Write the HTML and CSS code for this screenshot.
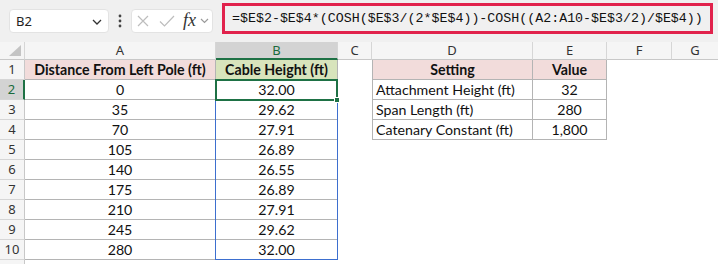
FILE: index.html
```html
<!DOCTYPE html>
<html>
<head>
<meta charset="utf-8">
<link rel="stylesheet" href="styles.css">
</head>
<body>
<div class="app">
  <div class="toolbar">
    <div class="namebox">
      <span class="ref">B2</span>
      <svg class="chev" width="10" height="6" viewBox="0 0 10 6"><path d="M1 1 L5 5 L9 1" fill="none" stroke="#333" stroke-width="1.3"/></svg>
    </div>
    <div class="dots">
      <svg width="4" height="14" viewBox="0 0 4 14"><circle cx="2" cy="2" r="1.4" fill="#444"/><circle cx="2" cy="7" r="1.4" fill="#444"/><circle cx="2" cy="12" r="1.4" fill="#444"/></svg>
    </div>
    <div class="fxbox">
      <svg class="ico-x" width="12" height="12" viewBox="0 0 12 12"><path d="M1 1 L11 11 M11 1 L1 11" stroke="#bdbdbd" stroke-width="1.2" fill="none"/></svg>
      <svg class="ico-ok" width="16" height="12" viewBox="0 0 16 12"><path d="M1 6.5 L5.5 11 L15 1" stroke="#bdbdbd" stroke-width="1.2" fill="none"/></svg>
      <span class="fx">fx</span>
      <svg class="chev2" width="9" height="6" viewBox="0 0 9 6"><path d="M1 1 L4.5 4.5 L8 1" fill="none" stroke="#9a9a9a" stroke-width="1.2"/></svg>
    </div>
    <div class="formula">=$E$2-$E$4*(COSH($E$3/(2*$E$4))-COSH((A2:A10-$E$3/2)/$E$4))</div>
  </div>
  <div class="sheet">
    <div class="grid">
      <div class="ch corner"><svg width="12" height="11" viewBox="0 0 12 11"><polygon points="12,0 12,11 0,11" fill="#c4c4c4"/></svg></div>
      <div class="ch">A</div>
      <div class="ch ch-sel">B</div>
      <div class="ch">C</div>
      <div class="ch">D</div>
      <div class="ch">E</div>
      <div class="ch">F</div>
      <div class="ch ch-last">G</div>

      <div class="rh">1</div>
      <div class="c t hdr pink">Distance From Left Pole (ft)</div>
      <div class="c t hdr green">Cable Height (ft)</div>
      <div class="c"></div>
      <div class="c t tl hdr pink">Setting</div>
      <div class="c t hdr pink">Value</div>
      <div class="c"></div>
      <div class="c"></div>

      <div class="rh rh-sel">2</div>
      <div class="c t">0</div>
      <div class="c t">32.00</div>
      <div class="c"></div>
      <div class="c t tl left">Attachment Height (ft)</div>
      <div class="c t">32</div>
      <div class="c"></div>
      <div class="c"></div>

      <div class="rh">3</div>
      <div class="c t">35</div>
      <div class="c t">29.62</div>
      <div class="c"></div>
      <div class="c t tl left">Span Length (ft)</div>
      <div class="c t">280</div>
      <div class="c"></div>
      <div class="c"></div>

      <div class="rh">4</div>
      <div class="c t">70</div>
      <div class="c t">27.91</div>
      <div class="c"></div>
      <div class="c t tl left">Catenary Constant (ft)</div>
      <div class="c t">1,800</div>
      <div class="c"></div>
      <div class="c"></div>

      <div class="rh">5</div>
      <div class="c t">105</div>
      <div class="c t">26.89</div>
      <div class="c"></div><div class="c"></div><div class="c"></div><div class="c"></div><div class="c"></div>

      <div class="rh">6</div>
      <div class="c t">140</div>
      <div class="c t">26.55</div>
      <div class="c"></div><div class="c"></div><div class="c"></div><div class="c"></div><div class="c"></div>

      <div class="rh">7</div>
      <div class="c t">175</div>
      <div class="c t">26.89</div>
      <div class="c"></div><div class="c"></div><div class="c"></div><div class="c"></div><div class="c"></div>

      <div class="rh">8</div>
      <div class="c t">210</div>
      <div class="c t">27.91</div>
      <div class="c"></div><div class="c"></div><div class="c"></div><div class="c"></div><div class="c"></div>

      <div class="rh">9</div>
      <div class="c t">245</div>
      <div class="c t">29.62</div>
      <div class="c"></div><div class="c"></div><div class="c"></div><div class="c"></div><div class="c"></div>

      <div class="rh">10</div>
      <div class="c t">280</div>
      <div class="c t">32.00</div>
      <div class="c"></div><div class="c"></div><div class="c"></div><div class="c"></div><div class="c"></div>

      <div class="rh"></div>
      <div class="c"></div><div class="c"></div><div class="c"></div><div class="c"></div><div class="c"></div><div class="c"></div><div class="c"></div>
    </div>
    <div class="spill"></div>
    <div class="sel"><span class="handle"></span></div>
  </div>
</div>
</body>
</html>
```

FILE: styles.css
```css
* { box-sizing: border-box; }
html, body { margin: 0; padding: 0; background: #fff; }
.app { width: 718px; height: 264px; overflow: hidden; font-family: "Lato", "Liberation Sans", sans-serif; }

.toolbar {
  height: 42px;
  background: #f0f0f0;
  display: flex;
  align-items: flex-start;
  padding-left: 9px;
}
.namebox {
  margin-top: 9px;
  width: 100px;
  height: 24px;
  background: #fff;
  border: 1px solid #e3e3e3;
  border-radius: 4px;
  display: flex;
  align-items: center;
  justify-content: space-between;
  padding: 0 6px 0 6px;
  font-family: "Noto Sans", "Open Sans", sans-serif;
  font-size: 13px;
  color: #222;
}
.chev { margin-top: 2px; }
.dots {
  width: 22px;
  height: 42px;
  display: flex;
  align-items: center;
  justify-content: center;
}
.fxbox {
  margin-top: 9px;
  width: 82px;
  height: 24px;
  background: #fff;
  border: 1px solid #e3e3e3;
  border-radius: 4px;
  display: flex;
  align-items: center;
  padding-left: 5px;
}
.ico-x { margin-right: 10px; }
.ico-ok { margin-right: 8px; }
.fx {
  font-family: "Liberation Serif", "DejaVu Serif", serif;
  font-style: italic;
  font-size: 18px;
  color: #333;
  margin-right: 4px;
  margin-top: -2px;
}
.formula {
  margin-top: 3px;
  margin-left: 9px;
  width: 491px;
  height: 31px;
  border: 3px solid #e1224c;
  padding-left: 7px;
  font-family: "Liberation Mono", "DejaVu Sans Mono", monospace;
  font-size: 13.3px;
  line-height: 25px;
  color: #111;
  white-space: nowrap;
}

.sheet { position: relative; }
.grid {
  display: grid;
  grid-template-columns: 25px 191px 122px 34px 161px 74px 65px 46px;
  grid-template-rows: 18px repeat(11, 20px);
}
.ch {
  background: #f5f5f5;
  border-right: 1px solid #d6d6d6;
  border-bottom: 1px solid #c8c8c8;
  font-family: "Noto Sans", "Open Sans", sans-serif;
  font-size: 13px;
  color: #333;
  text-align: center;
  line-height: 17px;
}
.ch-last { border-right: none; }
.corner { display: flex; align-items: flex-end; justify-content: flex-end; padding: 0 3px 3px 0; }
.ch-sel { background: #d3d3d3; color: #1a6b3c; border-bottom: 2px solid #1e7145; }
.rh {
  background: #f5f5f5;
  border-right: 1px solid #c8c8c8;
  border-bottom: 1px solid #d6d6d6;
  font-family: "Noto Sans", "Open Sans", sans-serif;
  font-size: 13px;
  color: #333;
  text-align: center;
  line-height: 19px;
}
.rh-sel { background: #d3d3d3; color: #1a6b3c; border-right: 2px solid #1e7145; }
.c {
  font-size: 14.2px;
  color: #111;
  text-align: center;
  line-height: 20px;
  white-space: nowrap;
}
.t { border-right: 1px solid #b4b4b4; border-bottom: 1px solid #b4b4b4; }
.tl { border-left: 1px solid #b4b4b4; }
.left { text-align: left; padding-left: 3px; }
.hdr { font-weight: 700; }
.pink { background: #f2dcdb; }
.green { background: #d8e4bc; }

.spill {
  position: absolute;
  left: 215px;
  top: 37px;
  width: 123px;
  height: 181px;
  border: 1.5px solid #3d6fcf;
  pointer-events: none;
}
.sel {
  position: absolute;
  left: 215px;
  top: 37px;
  width: 123px;
  height: 22px;
  border: 2px solid #1e7145;
}
.handle {
  position: absolute;
  right: -4px;
  bottom: -4px;
  width: 6px;
  height: 6px;
  background: #1e7145;
  border: 1px solid #fff;
}
```
